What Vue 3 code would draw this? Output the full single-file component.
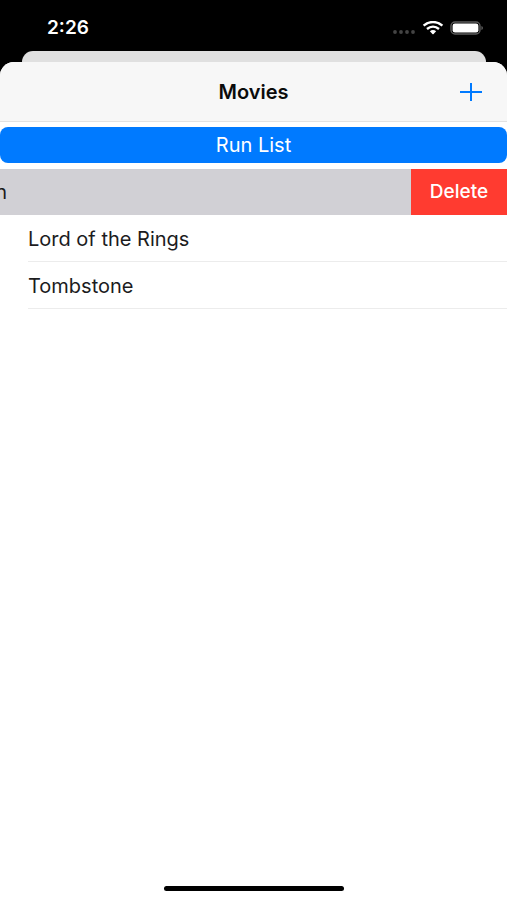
<script setup>
import { ref } from 'vue'

const movies = ref(['Lord of the Rings', 'Tombstone'])
</script>

<template>
  <div class="screen">
    <div class="status">
      <span class="time">2:26</span>
      <div class="indicators">
        <svg class="signal" width="24" height="6" viewBox="0 0 24 6" aria-hidden="true">
          <circle cx="3" cy="3" r="1.9" />
          <circle cx="9" cy="3" r="1.9" />
          <circle cx="15" cy="3" r="1.9" />
          <circle cx="21" cy="3" r="1.9" />
        </svg>
        <svg class="wifi" width="22" height="14" viewBox="0 0 22 14" aria-hidden="true">
          <path d="M1.6 4.700C7 -.2 15 -.2 20.400 4.700" />
          <path d="M5 8C8.600 4.900 13.400 4.900 17 8" />
          <path class="dot" d="M7.900 10.200C9.800 8.600 12.200 8.600 14.100 10.200L11.600 12.900Q11 13.400 10.400 12.900Z" />
        </svg>
        <svg width="34" height="14" viewBox="0 0 34 14" aria-hidden="true">
          <rect x="1" y="1" width="29" height="12" rx="4" fill="none" stroke="#5c5c5c" stroke-width="1.4" />
          <rect x="2.6" y="2.4" width="25.8" height="9.2" rx="2.4" fill="#fff" />
          <path d="M31.4 5V9Q33 8.5 33 7T31.4 5Z" fill="#5c5c5c" />
        </svg>
      </div>
    </div>
    <div class="back-sheet"></div>
    <main class="sheet">
      <header class="nav">
        <h1>Movies</h1>
        <button class="add" type="button" aria-label="Add">
          <svg width="24" height="20" viewBox="0 0 24 20" aria-hidden="true">
            <path d="M1 10H23M12 1V19" />
          </svg>
        </button>
      </header>
      <button class="run" type="button">Run List</button>
      <ul class="list">
        <li class="swiped">
          <span class="clipped">n</span>
          <button class="delete" type="button">Delete</button>
        </li>
        <li v-for="movie in movies" :key="movie" class="row">{{ movie }}</li>
      </ul>
      <div class="home"></div>
    </main>
  </div>
</template>

<style>
body {
  background: #000;
}
</style>

<style scoped>
.screen {
  min-height: 100vh;
  display: flex;
  flex-direction: column;
  background: #000;
  color: #1c1c1e;
  font-family: Inter, "Liberation Sans", sans-serif;
  font-size: 20px;
  line-height: 24px;
}
button {
  border: 0;
  padding: 0;
  font: inherit;
  cursor: pointer;
}
.status {
  height: 51px;
  box-sizing: border-box;
  padding: 4px 23px 0 47px;
  display: flex;
  align-items: center;
  justify-content: space-between;
  color: #fff;
}
.time {
  font-size: 19px;
  font-weight: 600;
}
.indicators {
  display: flex;
  align-items: center;
  gap: 6px;
}
.signal {
  fill: #444;
  align-self: flex-end;
}
.wifi {
  fill: none;
  stroke: #fff;
  stroke-width: 2.4;
}
.wifi .dot {
  fill: #fff;
  stroke: none;
}
.back-sheet {
  height: 11px;
  margin: 0 21px 0 22px;
  background: #e0e0e0;
  border-radius: 12px 12px 0 0;
}
.sheet {
  flex: 1;
  display: flex;
  flex-direction: column;
  background: #fff;
  border-radius: 14px 14px 0 0;
  overflow: hidden;
}
.nav {
  height: 60px;
  box-sizing: border-box;
  display: grid;
  grid-template-columns: 1fr auto 1fr;
  align-items: center;
  padding: 0 24px;
  background: #f7f7f7;
  border-bottom: 1px solid #e2e2e2;
}
h1 {
  grid-column: 2;
  margin: 0;
  font-size: 20px;
  font-weight: 600;
  color: #0b0b0b;
}
.add {
  justify-self: end;
  display: flex;
  background: none;
}
.add path {
  fill: none;
  stroke: #007aff;
  stroke-width: 2;
}
.run {
  height: 36px;
  margin: 5px 0 6px;
  border-radius: 8px;
  background: #007aff;
  color: #fff;
}
.list {
  list-style: none;
  margin: 0;
  padding: 0;
}
.swiped {
  height: 46px;
  display: flex;
  align-items: center;
  justify-content: space-between;
  background: #d1d0d5;
}
.clipped {
  width: 7px;
  display: flex;
  justify-content: flex-end;
  overflow: hidden;
}
.delete {
  width: 96px;
  height: 100%;
  background: #ff3b30;
  color: #fff;
  font-size: 19px;
  font-weight: 500;
}
.row {
  height: 47px;
  box-sizing: border-box;
  margin-left: 28px;
  padding-top: 2px;
  display: flex;
  align-items: center;
  border-bottom: 1px solid #ececec;
}
.home {
  width: 180px;
  height: 5px;
  margin: auto auto 9px;
  border-radius: 3px;
  background: #000;
}
</style>
